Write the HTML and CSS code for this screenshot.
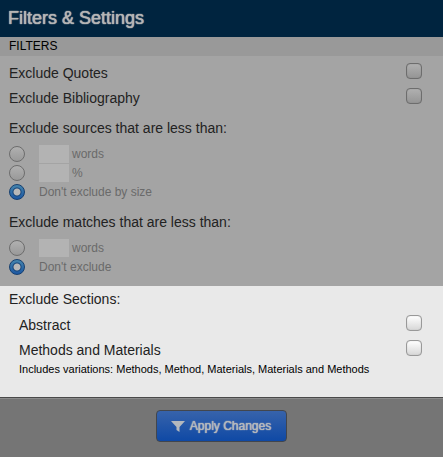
FILE: index.html
```html
<!DOCTYPE html>
<html lang="en">
    <head>
        <meta charset="UTF-8" />
        <meta name="viewport" content="width=device-width, initial-scale=1.0" />
        <title>Filters &amp; Settings</title>
        <link rel="stylesheet" href="styles.css">
    </head>
    <body>
        <form class="panel">
            <h1 class="panel-title">Filters &amp; Settings</h1>
            <h2 class="panel-subtitle">FILTERS</h2>

            <div class="filters">
                <div class="check-row">
                    <label for="exclude-quotes">Exclude Quotes</label>
                    <input type="checkbox" id="exclude-quotes" />
                </div>
                <div class="check-row">
                    <label for="exclude-bibliography">Exclude Bibliography</label>
                    <input type="checkbox" id="exclude-bibliography" />
                </div>

                <fieldset class="group">
                    <legend>Exclude sources that are less than:</legend>
                    <div class="radio-row">
                        <input type="radio" name="sources" id="sources-words" />
                        <input type="text" class="amount" aria-label="Source words" />
                        <label for="sources-words">words</label>
                    </div>
                    <div class="radio-row">
                        <input type="radio" name="sources" id="sources-percent" />
                        <input type="text" class="amount" aria-label="Source percent" />
                        <label for="sources-percent">%</label>
                    </div>
                    <div class="radio-row">
                        <input type="radio" name="sources" id="sources-all" checked />
                        <label for="sources-all">Don't exclude by size</label>
                    </div>
                </fieldset>

                <fieldset class="group">
                    <legend>Exclude matches that are less than:</legend>
                    <div class="radio-row">
                        <input type="radio" name="matches" id="matches-words" />
                        <input type="text" class="amount" aria-label="Match words" />
                        <label for="matches-words">words</label>
                    </div>
                    <div class="radio-row">
                        <input type="radio" name="matches" id="matches-all" checked />
                        <label for="matches-all">Don't exclude</label>
                    </div>
                </fieldset>
            </div>

            <div class="sections">
                <h3 class="sections-title">Exclude Sections:</h3>
                <div class="check-row indent">
                    <label for="exclude-abstract">Abstract</label>
                    <input type="checkbox" id="exclude-abstract" />
                </div>
                <div class="check-row indent">
                    <label for="exclude-methods">Methods and Materials</label>
                    <input type="checkbox" id="exclude-methods" />
                </div>
                <p class="note">Includes variations: Methods, Method, Materials, Materials and Methods</p>
            </div>

            <div class="footer">
                <button type="button" class="apply">
                    <svg width="14" height="12" viewBox="0 0 14 12" aria-hidden="true">
                        <path d="M0 1h14L8.500 7v5L5.500 10V7z" fill="#b4b8bd" />
                    </svg>
                    Apply Changes
                </button>
            </div>
        </form>
    </body>
</html>
```
FILE: styles.css
```css
body {
    margin: 0;
    background-color: #757575;
    font-family: "Liberation Sans", Arial, sans-serif;
    font-size: 14px;
    color: #222;
}

.panel {
    display: flex;
    flex-direction: column;
    min-height: 100vh;
}

.panel-title {
    margin: 0;
    padding: 0 8px;
    background-color: #00243f;
    color: #b5b5b5;
    font-size: 18px;
    font-weight: normal;
    line-height: 37px;
    text-shadow: 0 0 1px #b5b5b5, 0 0 1px #b5b5b5;
}

.panel-subtitle {
    margin: 0;
    padding: 0 9px;
    background-color: #999;
    color: #000;
    font-size: 12px;
    font-weight: normal;
    line-height: 19px;
}

.filters {
    padding: 4px 9px 10px;
    background-color: #a4a4a4;
}

.check-row {
    display: flex;
    align-items: center;
    justify-content: space-between;
    height: 25px;
    padding-right: 12px;
}

.check-row input {
    appearance: none;
    box-sizing: border-box;
    width: 16px;
    height: 16px;
    margin: 0 0 3px;
    border: 1px solid #6d6d6d;
    border-radius: 4px;
    background: linear-gradient(#b0b0b0, #959595);
    box-shadow: inset 0 0 1px #777;
}

.group {
    min-width: 0;
    margin: 2px 0 0;
    padding: 0;
    border: 0;
}

.group legend {
    padding: 0;
    line-height: 32px;
}

.group + .group {
    margin-top: 5px;
}

.radio-row {
    display: flex;
    align-items: center;
    height: 19px;
    color: #6a6a6a;
    font-size: 12px;
}

.radio-row input[type="radio"] {
    appearance: none;
    box-sizing: border-box;
    width: 16px;
    height: 16px;
    margin: 0 14px 0 0;
    border: 1px solid #6d6d6d;
    border-radius: 50%;
    background: linear-gradient(#b0b0b0, #999);
}

.radio-row input[type="radio"]:checked {
    border-color: #153f70;
    background: radial-gradient(circle, #b8b8b8 3px, #174477 4px, transparent 5px),
        linear-gradient(#4585ad, #1c57a2);
}

.amount {
    box-sizing: border-box;
    width: 30px;
    height: 18px;
    margin: 0 3px 0 0;
    padding: 0 3px;
    border: 0;
    background-color: #b3b3b3;
    font: inherit;
}

.sections {
    padding: 1px 9px 20px;
    border-bottom: 1px solid #4a4a4a;
    background-color: #e9e9e9;
}

.sections-title {
    margin: 0;
    font-size: 14px;
    font-weight: normal;
    line-height: 25px;
}

.indent {
    padding-left: 10px;
}

.sections .check-row input {
    border-color: #999;
    background: linear-gradient(#fff, #d7d7d7);
    box-shadow: inset 0 0 1px #aaa;
}

.note {
    margin: 0 0 0 10px;
    color: #000;
    font-size: 11px;
    line-height: 15px;
}

.footer {
    display: flex;
    justify-content: center;
    padding: 11px 0 15px;
    border-top: 1px solid #8c8c8c;
}

.apply {
    display: flex;
    align-items: center;
    gap: 5px;
    height: 32px;
    padding: 0 15px 0 14px;
    border: 1px solid #42464d;
    border-radius: 4px;
    background: linear-gradient(#3763ab, #0f49a5);
    color: #b4b8bd;
    font-family: inherit;
    font-size: 12px;
    text-shadow: 0 0 1px #b4b8bd, 0 0 1px #b4b8bd;
}
```
